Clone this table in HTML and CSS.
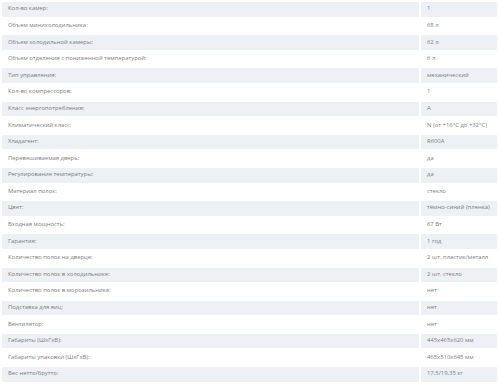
FILE: index.html
```html
<!DOCTYPE html>
<html lang="ru">
<head>
<meta charset="utf-8">
<link rel="stylesheet" href="styles.css">
</head>
<body>
<table class="specs">
<tbody>
<tr class="odd"><td class="k">Кол-во камер:</td><td class="v">1</td></tr>
<tr><td class="k">Объем минихолодильника:</td><td class="v">68 л</td></tr>
<tr class="odd"><td class="k">Объем холодильной камеры:</td><td class="v">62 л</td></tr>
<tr><td class="k">Объем отделения с пониженной температурой:</td><td class="v">6 л</td></tr>
<tr class="odd"><td class="k">Тип управления:</td><td class="v">механический</td></tr>
<tr><td class="k">Кол-во компрессоров:</td><td class="v">1</td></tr>
<tr class="odd"><td class="k">Класс энергопотребления:</td><td class="v">A</td></tr>
<tr><td class="k">Климатический класс:</td><td class="v">N (от +16°C до +32°C)</td></tr>
<tr class="odd"><td class="k">Хладагент:</td><td class="v">R600A</td></tr>
<tr><td class="k">Перевешиваемая дверь:</td><td class="v">да</td></tr>
<tr class="odd"><td class="k">Регулирование температуры:</td><td class="v">да</td></tr>
<tr><td class="k">Материал полок:</td><td class="v">стекло</td></tr>
<tr class="odd"><td class="k">Цвет:</td><td class="v">тёмно-синий (пленка)</td></tr>
<tr><td class="k">Входная мощность:</td><td class="v">67 Вт</td></tr>
<tr class="odd"><td class="k">Гарантия:</td><td class="v">1 год</td></tr>
<tr><td class="k">Количество полок на дверце:</td><td class="v">2 шт. пластик/металл</td></tr>
<tr class="odd"><td class="k">Количество полок в холодильнике:</td><td class="v">2 шт. стекло</td></tr>
<tr><td class="k">Количество полок в морозильнике:</td><td class="v">нет</td></tr>
<tr class="odd"><td class="k">Подставка для яиц:</td><td class="v">нет</td></tr>
<tr><td class="k">Вентилятор:</td><td class="v">нет</td></tr>
<tr class="odd"><td class="k">Габариты (ШxГxВ):</td><td class="v">445x465x620 мм</td></tr>
<tr><td class="k">Габариты упаковки (ШxГxВ):</td><td class="v">465x510x645 мм</td></tr>
<tr class="odd"><td class="k">Вес нетто/брутто:</td><td class="v">17,5/19,35 кг</td></tr>
</tbody>
</table>
</body>
</html>
```
FILE: styles.css
```css
html, body {
  margin: 0;
  padding: 0;
  background: #ffffff;
}
body {
  font-family: "Open Sans", "Noto Sans", sans-serif;
  font-size: 5.9px;
  font-weight: 400;
  color: #7e7e7e;
}
.specs {
  width: 499px;
  border-collapse: separate;
  border-spacing: 2px;
  table-layout: fixed;
}
.specs td {
  height: 14.6px;
  padding: 0 6px;
  vertical-align: middle;
  line-height: 1;
  white-space: nowrap;
}
.specs td.v {
  width: 64px;
}
.specs tr.odd td {
  background: #edf0f5;
}
```
